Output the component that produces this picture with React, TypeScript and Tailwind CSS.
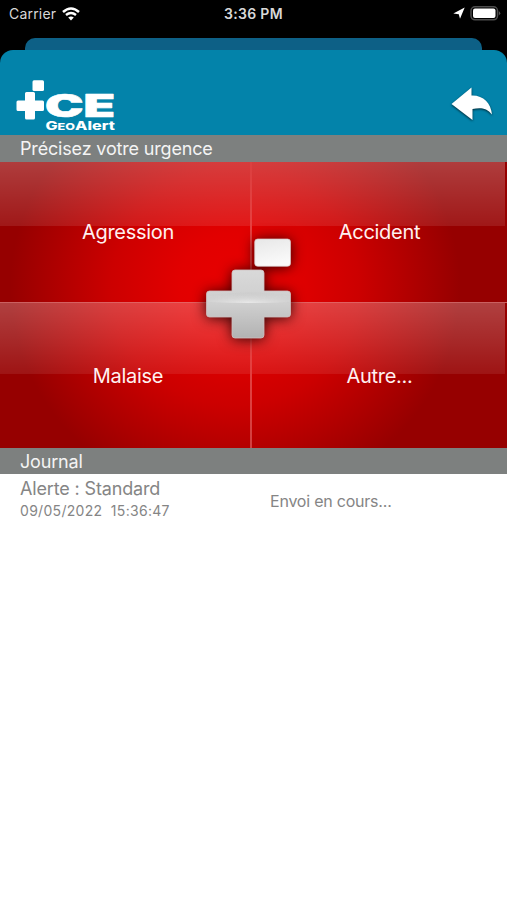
import React from "react";

type Emergency = { label: string; right: boolean; bottom: boolean };

const emergencies: Emergency[] = [
  { label: "Agression", right: false, bottom: false },
  { label: "Accident", right: true, bottom: false },
  { label: "Malaise", right: false, bottom: true },
  { label: "Autre...", right: true, bottom: true },
];

function StatusBar() {
  return (
    <div className="grid h-[38px] grid-cols-3 items-start bg-black text-[#d8d8d8]">
      <div className="flex h-7 items-center pb-px pl-[9px]">
        <span className="text-[14px] tracking-[0.2px]">Carrier</span>
        <svg className="ml-[6px]" width="18" height="14" viewBox="0 0 18 14" fill="none" stroke="#fff">
          <path d="M1 5Q9-2 17 5" strokeWidth="2.5" />
          <path d="M4 8Q9 3.800 14 8" strokeWidth="2.4" />
          <path d="M6.200 10.500Q9 8.300 11.800 10.500L9 13.500Z" fill="#fff" stroke="none" />
        </svg>
      </div>
      <div className="flex h-7 items-center justify-center pb-px text-[14px] font-semibold tracking-[0.3px]">3:36 PM</div>
      <div className="flex h-7 items-center justify-end pb-[2px] pr-[6px]">
        <svg width="12" height="12" viewBox="0 0 12 12" fill="#fff"><path d="M11.700.5 7 11.800 5.800 7.200.3 6.500Z" /></svg>
        <svg className="ml-[5px]" width="31" height="15" viewBox="0 0 31 15">
          <rect x="1" y="0.8" width="26.500" height="13" rx="4" fill="none" stroke="#4d4d4d" strokeWidth="1.5" />
          <rect x="3" y="2.600" width="22.500" height="9.500" rx="2" fill="#fff" />
          <path d="M28.800 5v4.500q3-2.200 0-4.500" fill="#555" />
        </svg>
      </div>
    </div>
  );
}

function Logo() {
  return (
    <svg width="100" height="52" viewBox="0 0 100 52" fill="#fff">
      <rect x="16.500" y="0.3" width="11.500" height="10.700" rx="1.5" />
      <path d="M10.500 12h7q1.500 0 1.500 1.500v7h7.500q1.500 0 1.500 1.500v7.500q0 1.500-1.500 1.500h-7.500v7q0 1.500-1.500 1.500h-7q-1.500 0-1.500-1.500v-7h-7q-1.500 0-1.500-1.500v-7.500q0-1.500 1.500-1.500h7v-7q0-1.500 1.500-1.500Z" />
      <text x="29" y="37.200" textLength="70" lengthAdjust="spacingAndGlyphs" fontSize="31" fontWeight="900" fontFamily="Inter, sans-serif" stroke="#fff" strokeWidth="0.7" strokeLinejoin="round">CE</text>
      <text x="29.500" y="49.500" textLength="69.500" lengthAdjust="spacingAndGlyphs" fontSize="11.5" fontWeight="800" fontFamily="Inter, sans-serif">
        G<tspan fontSize="9">EO</tspan>Alert
      </text>
    </svg>
  );
}

function Header() {
  return (
    <header className="bg-black">
      <div className="mx-[25px] h-[12px] rounded-t-[10px] bg-[#0d6086]" />
      <div className="flex h-[85px] items-start justify-between rounded-t-[13px] bg-[#0383aa] pl-4 pr-3">
        <div className="pt-[30px]"><Logo /></div>
        <button className="pt-[35px]" aria-label="Retour">
          <svg className="drop-shadow-[0_1px_1px_rgba(0,0,0,0.7)]" width="44" height="38" viewBox="0 0 44 38" fill="#fff">
            <path d="M.5 19 20.500 2.500V10.500C32 10 40 18 41 29.500C35.500 22.500 29 22.500 21.500 24V35Z" />
          </svg>
        </button>
      </div>
    </header>
  );
}

function SectionTitle({ children, layout }: { children: string; layout: string }) {
  return <h2 className={`flex items-center bg-[#7d807f] pl-5 text-[18px] leading-none text-[#f4f4f4] ${layout}`}>{children}</h2>;
}

function CrossMark() {
  return (
    <svg className="pointer-events-none absolute left-[190px] top-[60px] overflow-visible" width="120" height="135" viewBox="190 222 120 135">
      <defs>
        <linearGradient id="crossFill" x1="0" y1="270" x2="0" y2="338" gradientUnits="userSpaceOnUse">
          <stop offset="0" stopColor="#d9d9d9" />
          <stop offset="0.3" stopColor="#d2d2d2" />
          <stop offset="0.5" stopColor="#cfcfcf" />
          <stop offset="1" stopColor="#b2b2b2" />
        </linearGradient>
        <linearGradient id="crossShine" x1="0" y1="292" x2="0" y2="304" gradientUnits="userSpaceOnUse">
          <stop offset="0" stopColor="#c4c4c4" stopOpacity="0.5" />
          <stop offset="1" stopColor="#eeeeee" />
        </linearGradient>
        <radialGradient id="shineMask" cx="248" cy="303" r="42" gradientUnits="userSpaceOnUse">
          <stop offset="0" stopColor="#fff" />
          <stop offset="1" stopColor="#fff" stopOpacity="0.15" />
        </radialGradient>
        <mask id="shineFade"><rect x="206" y="290" width="86" height="16" fill="url(#shineMask)" /></mask>
        <linearGradient id="tileFill" x1="0" y1="0" x2="0.3" y2="1">
          <stop offset="0" stopColor="#e7e7e7" /><stop offset="1" stopColor="#fafafa" />
        </linearGradient>
      </defs>
      <g className="drop-shadow-[0_1px_7px_rgba(40,0,0,0.95)]">
        <rect x="254.700" y="239" width="35.800" height="27.300" rx="3" fill="url(#tileFill)" stroke="#d7c5c5" strokeWidth="0.7" />
        <path d="M235 270h26q3 0 3 3v18h23.500q3 0 3 3v20q0 3-3 3h-23.500v18q0 3-3 3h-26q-3 0-3-3v-18h-22.500q-3 0-3-3v-20q0-3 3-3h22.500v-18q0-3 3-3Z" fill="url(#crossFill)" stroke="#d0c0c0" strokeWidth="0.8" />
      </g>
      <path d="M208 295q40-5 82 0v7q-42 2-82 0Z" fill="url(#crossShine)" mask="url(#shineFade)" />
    </svg>
  );
}

function EmergencyPad() {
  return (
    <div className="relative h-[286px] bg-[radial-gradient(ellipse_225px_215px_at_235px_125px,#e80000_0%,#e20000_25%,#cc0000_55%,#ae0000_80%,#960000_100%)]">
      <div className="grid h-full grid-cols-[252px_255px] grid-rows-[140px_146px]">
        {emergencies.map(({ label, right, bottom }) => (
          <button
            key={label}
            className={`relative flex items-center justify-center ${right ? "" : "border-r-2 border-r-[#ee808080] pl-[6px]"} ${bottom ? "border-t border-t-[#e99999a0]" : ""}`}
          >
            <span className={`absolute left-0 top-0 bg-linear-to-b ${right ? "right-[2px]" : "right-0"} ${bottom ? "h-[71px] from-[#ffffff40] to-[#ffffff14]" : "h-[64px] from-[#ffffff3d] to-[#ffffff18]"}`} />
            <span className="relative whitespace-nowrap text-[20px] leading-none tracking-[-0.3px] text-[#fff1f1]">{label}</span>
          </button>
        ))}
      </div>
      <CrossMark />
    </div>
  );
}

export default function App() {
  return (
    <main className="flex h-[900px] w-[507px] flex-col overflow-hidden bg-white font-[Inter,sans-serif]">
      <StatusBar />
      <Header />
      <SectionTitle layout="h-[27px] pt-px tracking-[-0.17px]">Précisez votre urgence</SectionTitle>
      <EmergencyPad />
      <SectionTitle layout="h-[26px] pt-px tracking-[-0.17px]">Journal</SectionTitle>
      <div className="grid grid-cols-[250px_1fr] pl-5 text-[#858585]">
        <div className="pt-1">
          <div className="text-[18px] leading-[21px] tracking-[-0.15px]">Alerte : Standard</div>
          <div className="whitespace-pre pt-px text-[14px] leading-[22px] tracking-[0.3px]">09/05/2022  15:36:47</div>
        </div>
        <div className="pt-[17px] text-[16px] leading-[21px] tracking-[-0.22px]">Envoi en cours...</div>
      </div>
    </main>
  );
}
